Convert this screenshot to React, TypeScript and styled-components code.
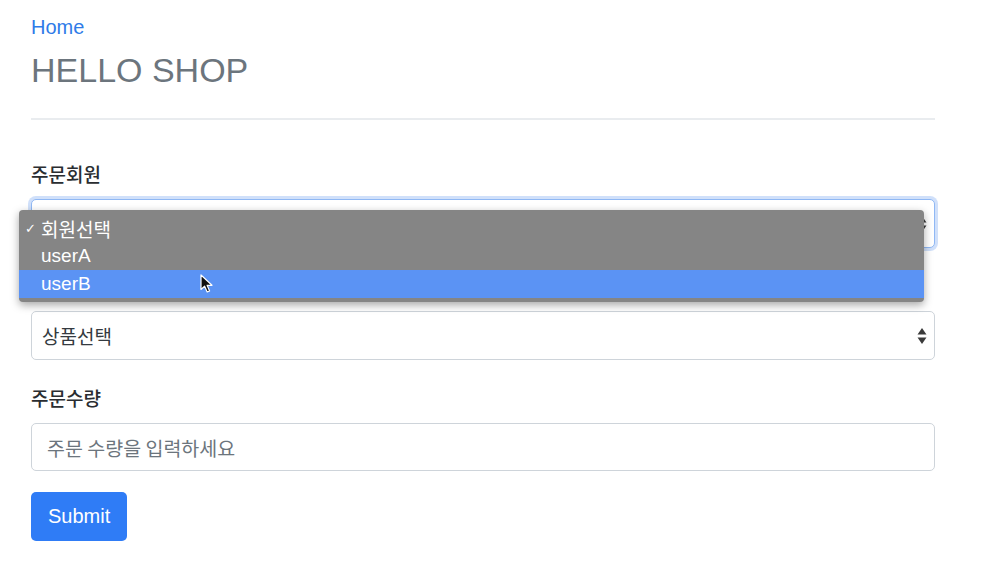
import styled, { createGlobalStyle } from 'styled-components';

const GlobalStyle = createGlobalStyle`
  body {
    margin: 0;
    background: #ffffff;
    font-family: 'Liberation Sans', 'Noto Sans CJK KR', Arial, sans-serif;
  }
`;

const members = ['회원선택', 'userA', 'userB'];

function SelectArrows() {
  return (
    <ArrowsSvg width='10' height='18' viewBox='0 0 10 18'>
      <path d='M5 1 L9.5 7.5 L0.5 7.5 Z' fill='#3a3a3a' />
      <path d='M5 17 L9.5 10.5 L0.5 10.5 Z' fill='#3a3a3a' />
    </ArrowsSvg>
  );
}

function Cursor() {
  return (
    <CursorSvg width='14' height='20' viewBox='0 0 14 20'>
      <path
        d='M1 1 L1 15.5 L4.6 12.2 L7.2 18 L9.6 17 L7.1 11.3 L12 11.3 Z'
        fill='#111'
        stroke='#fff'
        strokeWidth='1.2'
        strokeLinejoin='round'
      />
    </CursorSvg>
  );
}

function App() {
  return (
    <PageDiv>
      <GlobalStyle />
      <HeaderDiv>
        <HomeLink href='#'>Home</HomeLink>
        <TitleH3>HELLO SHOP</TitleH3>
      </HeaderDiv>

      <FormEl onSubmit={(e) => e.preventDefault()}>
        <GroupDiv>
          <LabelEl>주문회원</LabelEl>
          <SelectBox $focused>
            <SelectText>회원선택</SelectText>
            <SelectArrows />
          </SelectBox>
          <MenuDiv>
            {members.map((m, i) => (
              <MenuItem key={m} $active={i === 2}>
                <CheckSpan>{i === 0 ? '✓' : ''}</CheckSpan>
                {m}
              </MenuItem>
            ))}
            <Cursor />
          </MenuDiv>
        </GroupDiv>

        <GroupDiv>
          <LabelEl>상품명</LabelEl>
          <SelectBox>
            <SelectText>상품선택</SelectText>
            <SelectArrows />
          </SelectBox>
        </GroupDiv>

        <GroupDiv>
          <LabelEl>주문수량</LabelEl>
          <InputEl placeholder='주문 수량을 입력하세요' />
        </GroupDiv>

        <SubmitButton type='submit'>Submit</SubmitButton>
      </FormEl>
    </PageDiv>
  );
}

const PageDiv = styled.div`
  width: 904px;
  padding-left: 31px;
  box-sizing: content-box;
`;

const HeaderDiv = styled.div`
  display: flex;
  flex-direction: column;
  padding-top: 15px;
  padding-bottom: 28px;
  border-bottom: 2px solid #e9ecef;
`;

const HomeLink = styled.a`
  font-size: 20px;
  line-height: 24px;
  color: #2f7be8;
  text-decoration: none;
`;

const TitleH3 = styled.h3`
  margin: 11px 0 0;
  font-size: 34px;
  line-height: 40px;
  font-weight: 400;
  color: #6c757d;
`;

const FormEl = styled.form`
  display: flex;
  flex-direction: column;
  align-items: flex-start;
  padding-top: 42px;
`;

const GroupDiv = styled.div`
  position: relative;
  display: flex;
  flex-direction: column;
  width: 100%;
  margin-bottom: 26px;

  &:nth-child(3) {
    margin-bottom: 21px;
  }
`;

const LabelEl = styled.label`
  font-family: 'Noto Sans CJK KR', sans-serif;
  font-size: 19px;
  font-weight: 500;
  line-height: 24px;
  color: #2a2d31;
  margin-bottom: 13px;
`;

const SelectBox = styled.div<{ $focused?: boolean }>`
  display: flex;
  align-items: center;
  justify-content: space-between;
  height: 49px;
  box-sizing: border-box;
  padding: 0 7px 0 10px;
  border: 1px solid ${(p) => (p.$focused ? '#90b8f4' : '#ced4da')};
  border-radius: 5px;
  box-shadow: ${(p) => (p.$focused ? '0 0 0 3px rgba(120, 165, 240, 0.35)' : 'none')};
  background: #fff;
`;

const SelectText = styled.span`
  font-family: 'Noto Sans CJK KR', sans-serif;
  font-size: 19px;
  color: #343a40;
`;

const ArrowsSvg = styled.svg`
  display: block;
`;

const MenuDiv = styled.div`
  position: absolute;
  left: -12px;
  top: 48px;
  width: 905px;
  box-sizing: border-box;
  padding: 4px 0 4px;
  background: #858585;
  border-radius: 4px;
  box-shadow: 0 3px 8px rgba(0, 0, 0, 0.35);
  z-index: 10;
`;

const MenuItem = styled.div<{ $active?: boolean }>`
  display: flex;
  align-items: center;
  height: 28px;
  padding-left: 6px;
  font-family: 'Liberation Sans', 'Noto Sans CJK KR', sans-serif;
  font-size: 19px;
  color: #ffffff;
  background: ${(p) => (p.$active ? '#5b93f4' : 'transparent')};
`;

const CheckSpan = styled.span`
  display: inline-block;
  width: 16px;
  font-size: 13px;
  font-family: 'DejaVu Sans', sans-serif;
`;

const CursorSvg = styled.svg`
  position: absolute;
  left: 181px;
  top: 64px;
`;

const InputEl = styled.input`
  height: 48px;
  box-sizing: border-box;
  padding: 0 15px;
  border: 1px solid #ced4da;
  border-radius: 5px;
  font-family: 'Noto Sans CJK KR', sans-serif;
  font-size: 19.5px;
  color: #495057;
  outline: none;

  &::placeholder {
    color: #6c757d;
  }
`;

const SubmitButton = styled.button`
  height: 49px;
  padding: 0 17px;
  border: none;
  border-radius: 5px;
  background: #2f7cf6;
  color: #fff;
  font-family: 'Liberation Sans', sans-serif;
  font-size: 20px;
  cursor: pointer;
`;

export default App;
